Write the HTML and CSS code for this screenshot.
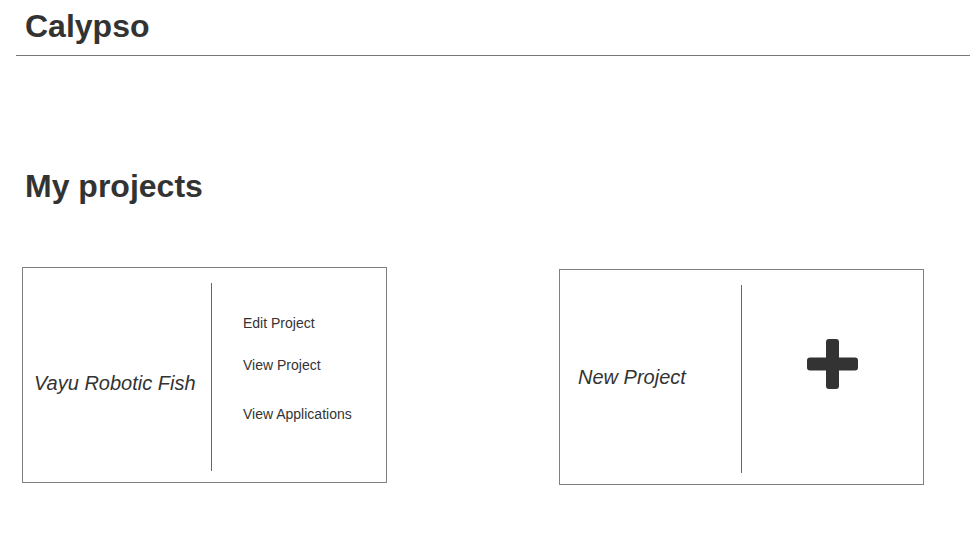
FILE: index.html
```html
<!DOCTYPE html>
<html>
<head>
<meta charset="utf-8">
<title>Calypso</title>
<link rel="stylesheet" href="styles.css">
</head>
<body>
<header class="topbar">
  <h1 class="brand">Calypso</h1>
</header>
<main class="content">
  <h2 class="section-title">My projects</h2>
  <div class="cards">
    <div class="card">
      <div class="card-name card-name-project">Vayu Robotic Fish</div>
      <div class="divider"></div>
      <ul class="actions">
        <li class="action">Edit Project</li>
        <li class="action">View Project</li>
        <li class="action action-last">View Applications</li>
      </ul>
    </div>
    <div class="card card-new">
      <div class="card-name card-name-new">New Project</div>
      <div class="divider"></div>
      <div class="add-area">
        <svg class="plus" width="51" height="50" viewBox="0 0 51 50">
          <rect x="19" y="0" width="13" height="50" rx="3" fill="#333"/>
          <rect x="0" y="18.5" width="51" height="13" rx="3" fill="#333"/>
        </svg>
      </div>
    </div>
  </div>
</main>
</body>
</html>
```
FILE: styles.css
```css
html, body {
  margin: 0;
  padding: 0;
  background: #fff;
}
body {
  font-family: "Liberation Sans", Arial, sans-serif;
  color: #333;
}
.topbar {
  margin-left: 16px;
  padding-left: 9px;
  padding-bottom: 13px;
  border-bottom: 1px solid #777;
}
.brand {
  margin: 0;
  padding-top: 10px;
  font-size: 32px;
  line-height: 32px;
  font-weight: bold;
}
.content {
  padding-left: 22px;
}
.section-title {
  margin: 114px 0 0 3px;
  font-size: 32px;
  line-height: 32px;
  font-weight: bold;
}
.cards {
  display: flex;
  align-items: flex-start;
  gap: 172px;
  margin-top: 65px;
}
.card {
  box-sizing: border-box;
  width: 365px;
  height: 216px;
  border: 1px solid #808080;
  display: flex;
}
.card-new {
  margin-top: 2px;
}
.card-name {
  box-sizing: border-box;
  font-style: italic;
  font-size: 20px;
  line-height: 24px;
  white-space: nowrap;
}
.card-name-project {
  width: 188px;
  padding: 103px 0 0 11px;
}
.card-name-new {
  width: 181px;
  padding: 95px 0 0 18px;
}
.divider {
  width: 1px;
  height: 188px;
  margin-top: 15px;
  background: #666;
}
.actions {
  list-style: none;
  margin: 0;
  padding: 47px 0 0 31px;
  display: flex;
  flex-direction: column;
  gap: 26px;
}
.action {
  font-size: 14px;
  line-height: 16px;
  white-space: nowrap;
}
.action-last {
  margin-top: 7px;
}
.add-area {
  flex: 1;
  display: flex;
  justify-content: center;
  padding-top: 69px;
}
.plus {
  display: block;
}
```
